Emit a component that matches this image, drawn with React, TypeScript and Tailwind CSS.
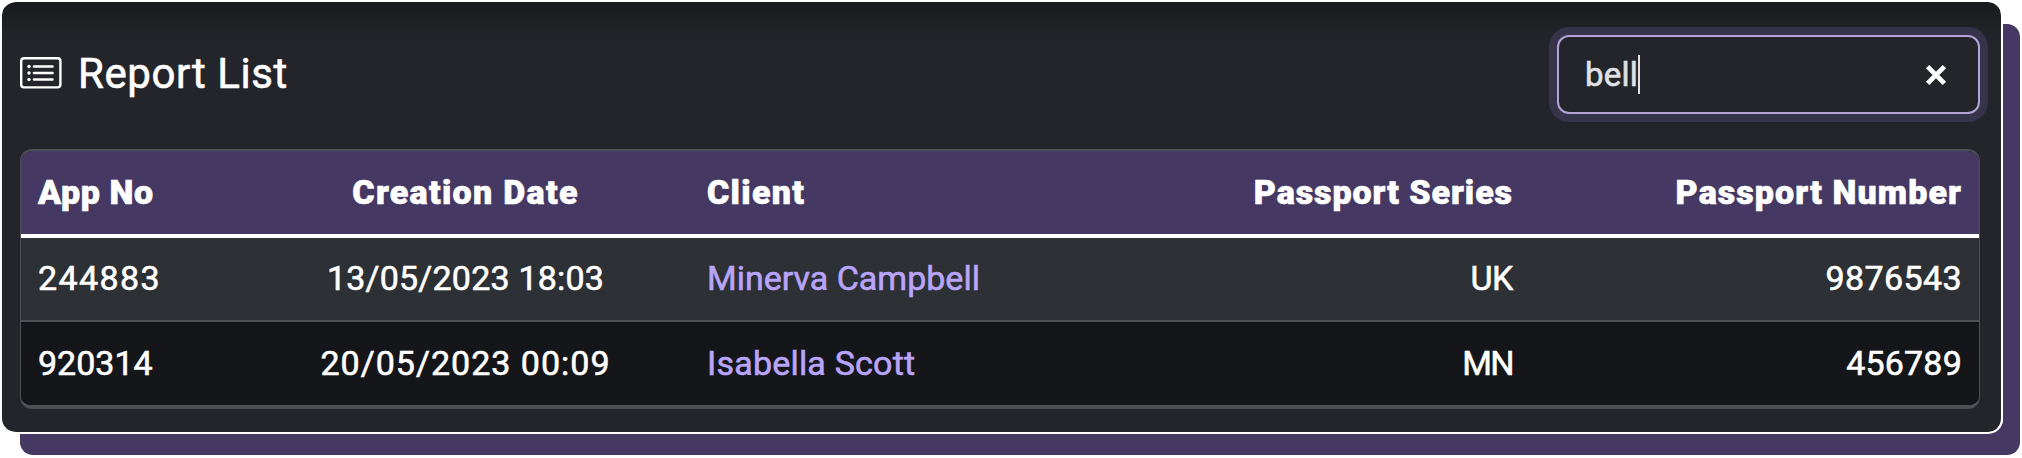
import React from "react";

type Cell = { text: string; className: string };

const columns: Cell[] = [
  { text: "App No", className: "pl-[17px] text-left tracking-[0.6px]" },
  { text: "Creation Date", className: "pl-4 text-center tracking-[1.3px]" },
  { text: "Client", className: "pl-[17px] text-left tracking-[1.3px]" },
  { text: "Passport Series", className: "pl-4 text-right tracking-[0.95px]" },
  { text: "Passport Number", className: "pl-4 text-right tracking-[1.1px]" },
];

const rows: Cell[][] = [
  [
    { text: "244883", className: "pl-[17px] text-left tracking-[1.4px]" },
    { text: "13/05/2023 18:03", className: "pl-4 text-center tracking-[0.2px]" },
    { text: "Minerva Campbell", className: "pl-[17px] text-left tracking-[0px] text-[#b9a5fb]" },
    { text: "UK", className: "pl-4 text-right tracking-[-0.4px]" },
    { text: "9876543", className: "pl-4 text-right tracking-[0.4px]" },
  ],
  [
    { text: "920314", className: "pl-[17px] text-left tracking-[0px]" },
    { text: "20/05/2023 00:09", className: "pl-4 text-center tracking-[1px]" },
    { text: "Isabella Scott", className: "pl-[17px] text-left tracking-[0.2px] text-[#b9a5fb]" },
    { text: "MN", className: "pl-4 text-right tracking-[-1.6px]" },
    { text: "456789", className: "pl-4 text-right tracking-[0.2px]" },
  ],
];

const grid = "grid grid-cols-[220px_449px_409px_430px_449px] items-center";

function ListIcon() {
  return (
    <svg width="42" height="32" viewBox="0 0 42 32" fill="none" stroke="white">
      <rect x="1.2" y="1.2" width="39.2" height="29.2" rx="2.8" strokeWidth="2.4" />
      <path d="M14 9.5h18.5M14 16h18.5M14 22.5h18.5" strokeWidth="2.6" strokeLinecap="round" />
      <g fill="white" stroke="none">
        <circle cx="9" cy="9.5" r="1.7" />
        <circle cx="9" cy="16" r="1.7" />
        <circle cx="9" cy="22.5" r="1.7" />
      </g>
    </svg>
  );
}

function ClearIcon() {
  return (
    <svg width="22" height="22" viewBox="0 0 22 22" stroke="white" strokeWidth="4.8">
      <path d="M2.6 2.6l16.8 16.8M19.4 2.6L2.6 19.4" />
    </svg>
  );
}

export default function App() {
  return (
    <div className="h-[458px] w-[2022px] overflow-hidden bg-white font-[Roboto,sans-serif] text-white [-webkit-text-stroke:0.6px]">
      <div className="ml-px h-[433px] w-[2002px] rounded-[14px] shadow-[18px_23px_0_-1px_#453963]">
        <div className="h-[434px] w-[2002px] rounded-[15px] border-2 border-white border-l-[#f4f6f7] border-l-[1.5px] bg-[linear-gradient(to_bottom,#191a1e_0px,#1f2326_26px,#24252b_46px)] bg-clip-padding pl-[18px] pr-[17px] pt-[25px]">
          <div className="flex h-[95px] items-center justify-between pr-[4px]">
            <div className="mb-[3px] flex h-[78px] items-center">
              <ListIcon />
              <h1 className="ml-[16px] pt-[2px] text-[42px] leading-[50px] tracking-[0.6px]">Report List</h1>
            </div>
            <div className="flex h-[79px] w-[423px] items-center justify-between rounded-[12px] border-2 border-[#b3a3d6] bg-[#24252b] pl-[26px] pr-[31px] shadow-[0_0_0_8px_#37334b]">
              <div className="flex items-center">
                <span className="text-[33px] leading-[40px] tracking-[0.2px] text-[#dee2e6]">bell</span>
                <span className="h-[39px] w-[2px] bg-[#dee2e6]" />
              </div>
              <ClearIcon />
            </div>
          </div>
          <div className="mt-[27px] w-[1960px] overflow-hidden rounded-[12px] border-x-[1.5px] border-t-2 border-b-4 border-[#4d5054]">
            <div className={`${grid} h-[87px] border-b-4 border-white bg-[#453963] text-[34px] font-black`}>
              {columns.map((c) => (
                <div key={c.text} className={`pr-4 ${c.className}`}>{c.text}</div>
              ))}
            </div>
            <div className={`${grid} h-[84px] border-b-2 border-[#4d5054] bg-[#2d3034] pb-px text-[34px]`}>
              {rows[0].map((c) => (
                <div key={c.text} className={`pr-4 ${c.className}`}>{c.text}</div>
              ))}
            </div>
            <div className={`${grid} h-[83px] bg-[#151619] text-[34px]`}>
              {rows[1].map((c) => (
                <div key={c.text} className={`pr-4 ${c.className}`}>{c.text}</div>
              ))}
            </div>
          </div>
        </div>
      </div>
    </div>
  );
}
